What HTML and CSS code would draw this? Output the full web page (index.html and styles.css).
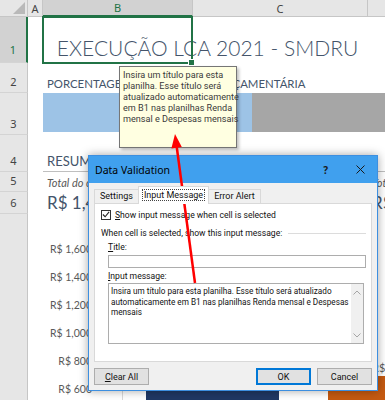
FILE: index.html
```html
<!DOCTYPE html>
<html>
  <head>
    <title>data validation</title>
    <link rel="stylesheet" href="styles.css">
  </head>

  <body>
    <div class="sheet">
      <div class="corner"></div>
      <div class="colhead">A</div>
      <div class="colhead sel">B</div>
      <div class="colhead">C</div>
      <div class="colhead"></div>

      <div class="rowhead r1 sel">1</div>
      <div class="rowhead r2">2</div>
      <div class="rowhead r3">3</div>
      <div class="rowhead r4">4</div>
      <div class="rowhead r5">5</div>
      <div class="rowhead r6">6</div>
      <div class="rowhead r7"></div>

      <div class="cell title">EXECUÇÃO LCA 2021 - SMDRU</div>
      <div class="active"></div>
      <div class="cell subtitle">PORCENTAGEM DE EXECUÇÃO ORÇAMENTÁRIA</div>
      <div class="progress"><div class="done"></div><div class="rest"></div></div>
      <div class="cell section">RESUMO GERAL</div>
      <div class="cell note">Total do orçamento</div>
      <div class="cell note colD">Total do orçamento</div>
      <div class="cell amount">R$ 1,420,000.00</div>
      <div class="cell amount colD">R$ 1,000,000.00</div>

      <div class="chart">
        <div class="axis">
          <span>R$ 1,600</span>
          <span>R$ 1,400</span>
          <span>R$ 1,200</span>
          <span>R$ 1,000</span>
          <span>R$ 800</span>
          <span>R$ 600</span>
        </div>
        <div class="plot">
          <div class="bar navy"></div>
          <div class="col2">
            <span class="barlabel">R$ 900</span>
            <div class="bar orange"></div>
          </div>
        </div>
      </div>
    </div>

    <!-- input message tooltip -->
    <div class="tip">
      Insira um título para esta<br>
      planilha. Esse título será<br>
      atualizado automaticamente<br>
      em B1 nas planilhas Renda<br>
      mensal e Despesas mensais
    </div>

    <div class="dialog">
      <div class="titlebar">
        <span class="dtitle">Data Validation</span>
        <span class="help">?</span>
        <svg class="close" width="9" height="9" viewBox="0 0 9 9">
          <path d="M0.5 0.5 L8.5 8.5 M8.5 0.5 L0.5 8.5" stroke="#1a1a1a" stroke-width="1" fill="none" />
        </svg>
      </div>
      <div class="dbody">
        <div class="tabs">
          <div class="tab">Settings</div>
          <div class="tab on"><span class="focus">Input Message</span></div>
          <div class="tab">Error Alert</div>
        </div>
        <div class="panel">
          <div class="check">
            <span class="box">
              <svg width="9" height="9" viewBox="0 0 9 9">
                <path d="M1 4.5 L3.5 7 L8 1.5" stroke="#222" stroke-width="1.2" fill="none" />
              </svg>
            </span>
            <span><u>S</u>how input message when cell is selected</span>
          </div>
          <div class="legend">
            <span>When cell is selected, show this input message:</span>
            <span class="rule"></span>
          </div>
          <div class="field"><u>T</u>itle:</div>
          <div class="input"></div>
          <div class="field"><u>I</u>nput message:</div>
          <div class="textarea">
            <div class="msg">
              Insira um título para esta planilha. Esse título será atualizado<br>
              automaticamente em B1 nas planilhas Renda mensal e Despesas<br>
              mensais
            </div>
            <div class="scroll">
              <svg width="8" height="5" viewBox="0 0 8 5">
                <path d="M0.5 4.5 L4 1 L7.5 4.5" stroke="#a6a6a6" fill="none" />
              </svg>
              <svg width="8" height="5" viewBox="0 0 8 5">
                <path d="M0.5 0.5 L4 4 L7.5 0.5" stroke="#a6a6a6" fill="none" />
              </svg>
            </div>
          </div>
        </div>
        <div class="buttons">
          <div class="btn"><u>C</u>lear All</div>
          <div class="spacer"></div>
          <div class="btn default">OK</div>
          <div class="btn">Cancel</div>
        </div>
      </div>
    </div>

    <!-- red arrow from the message box to the tooltip -->
    <svg class="arrow" width="385" height="400" viewBox="0 0 385 400">
      <line x1="195" y1="283" x2="176.6" y2="146" stroke="#ff0000" stroke-width="2.5" />
      <polygon points="175,134 181.8,147 171.4,148.4" fill="#ff0000" />
    </svg>
  </body>
</html>
```

FILE: styles.css
```css
/* page */

* {
  box-sizing: border-box;
}

body {
  margin: 0;
  width: 385px;
  height: 400px;
  overflow: hidden;
  position: relative;
  background-color: #fff;
  font-family: "Noto Sans", sans-serif;
}

/* the worksheet grid */

.sheet {
  display: grid;
  grid-template-columns: 28px 15px 150px 175px 1fr;
  grid-template-rows: 17px 46px 30px 42px 37px 20px 22px 1fr;
  height: 400px;
}

.corner {
  grid-row: 1;
  grid-column: 1;
  background-color: #e6e6e6;
  border-right: 1px solid #c6c6c6;
  border-bottom: 1px solid #c6c6c6;
  position: relative;
}

.corner::after {
  content: "";
  position: absolute;
  right: 2px;
  bottom: 2px;
  border-left: 12px solid transparent;
  border-bottom: 12px solid #b9b9b9;
}

.colhead {
  grid-row: 1;
  background-color: #e6e6e6;
  border-right: 1px solid #c6c6c6;
  border-bottom: 1px solid #c6c6c6;
  color: #444;
  font-size: 11px;
  display: flex;
  align-items: center;
  justify-content: center;
}

.colhead.sel {
  background-color: #d2d2d2;
  color: #217346;
  border-bottom: 2px solid #217346;
}

.rowhead {
  grid-column: 1;
  background-color: #e6e6e6;
  border-right: 1px solid #c6c6c6;
  border-bottom: 1px solid #d4d4d4;
  color: #444;
  font-size: 11px;
  line-height: 12px;
  display: flex;
  align-items: flex-end;
  justify-content: center;
  padding-bottom: 4px;
}

.rowhead.sel {
  background-color: #d2d2d2;
  color: #217346;
  border-right: 2px solid #217346;
  padding-bottom: 6px;
}

.r1 { grid-row: 2; }
.r2 { grid-row: 3; }
.r3 { grid-row: 4; }
.r4 { grid-row: 5; }
.r5 { grid-row: 6; }
.r6 { grid-row: 7; }
.r7 { grid-row: 8; border-bottom: none; }

/* cells */

.cell {
  white-space: nowrap;
  display: flex;
  align-items: flex-end;
  padding-left: 4px;
  color: #44546a;
  font-family: Lato, sans-serif;
}

.title {
  grid-row: 2;
  grid-column: 3 / 5;
  justify-content: center;
  font-size: 21px;
  font-weight: 300;
  padding-bottom: 3px;
}

.active {
  grid-row: 2;
  grid-column: 3;
  margin: -1px 0 -1px -1px;
  border: 2px solid #217346;
  position: relative;
}

.active::after {
  content: "";
  position: absolute;
  right: -4px;
  bottom: -4px;
  width: 5px;
  height: 5px;
  background-color: #217346;
  border: 1px solid #fff;
}

.subtitle {
  grid-row: 3;
  grid-column: 3 / 6;
  font-size: 11.4px;
  padding-bottom: 3px;
}

.progress {
  grid-row: 4;
  grid-column: 3 / 6;
  display: flex;
  margin-bottom: 3px;
}

.done {
  width: 209px;
  background-color: #9dc3e6;
}

.rest {
  flex: 1;
  background-color: #a6a6a6;
}

.section {
  grid-row: 5;
  grid-column: 3 / 6;
  font-size: 13px;
  border-bottom: 1px solid #bfbfbf;
  padding-bottom: 2px;
}

.note {
  grid-row: 6;
  grid-column: 3;
  font-size: 11px;
  font-style: italic;
  color: #595959;
  padding-bottom: 3px;
}

.amount {
  grid-row: 7;
  grid-column: 3;
  font-size: 17px;
  padding-bottom: 1px;
}

.colD {
  grid-column: 5;
}

/* chart in row 7 */

.chart {
  grid-row: 8;
  grid-column: 2 / 6;
  display: flex;
}

.axis {
  width: 64px;
  display: flex;
  flex-direction: column;
  align-items: flex-end;
  padding-top: 21px;
  color: #595959;
  font-family: Lato, sans-serif;
  font-size: 10.5px;
}

.axis span {
  height: 28px;
  line-height: 28px;
}

.plot {
  flex: 1;
  display: flex;
  align-items: flex-end;
  margin-left: 30px;
  padding-left: 23px;
  border-left: 1px solid #d9d9d9;
}

.bar {
  width: 133px;
}

.navy {
  height: 100px;
  background-color: #203864;
}

.col2 {
  margin-left: 49px;
  flex: 1;
  display: flex;
  flex-direction: column;
}

.barlabel {
  padding-left: 44px;
  color: #595959;
  font-family: Lato, sans-serif;
  font-size: 11px;
  line-height: 16px;
}

.orange {
  width: auto;
  height: 27px;
  background-color: #c55a11;
}

/* input message tooltip */

.tip {
  position: absolute;
  left: 119px;
  top: 66px;
  width: 118px;
  height: 82px;
  padding: 3px 3px;
  background-color: #ffffe1;
  border: 1px solid #767676;
  box-shadow: 2px 2px 3px rgba(0, 0, 0, 0.25);
  color: #3a3a3a;
  font-family: Roboto, sans-serif;
  font-size: 9.1px;
  line-height: 11px;
  white-space: nowrap;
}

/* data validation dialog */

.dialog {
  position: absolute;
  left: 88px;
  top: 155px;
  width: 290px;
  height: 236px;
  border: 1px solid #3d8fe0;
  background-color: #f0f0f0;
  box-shadow: 0 0 9px rgba(0, 0, 0, 0.35);
  color: #111;
  font-family: Roboto, sans-serif;
  font-size: 9px;
}

.titlebar {
  height: 27px;
  background-color: #40a0ee;
  display: flex;
  align-items: center;
  padding-left: 6px;
  font-family: "Noto Sans", sans-serif;
}

.dtitle {
  flex: 1;
  font-size: 10.5px;
  color: #000;
}

.help {
  font-size: 10px;
  font-weight: bold;
  color: #1a1a1a;
  margin-right: 28px;
}

.close {
  margin-right: 12px;
}

.dbody {
  padding: 3px 5px 0 5px;
}

.tabs {
  display: flex;
  align-items: flex-end;
  height: 17px;
}

.tab {
  height: 14px;
  padding: 0 5px;
  border: 1px solid #d9d9d9;
  border-bottom: none;
  line-height: 13px;
  margin-right: -1px;
}

.tab.on {
  height: 18px;
  background-color: #fff;
  line-height: 16px;
  padding: 0 3px;
  position: relative;
  z-index: 1;
  margin-bottom: -1px;
}

.focus {
  border: 1px dotted #444;
  padding: 0 1px;
}

.panel {
  height: 159px;
  background-color: #fff;
  border: 1px solid #d9d9d9;
  padding: 5px 5px 0 6px;
  font-size: 8.6px;
}

.check {
  display: flex;
  align-items: center;
  height: 11px;
  gap: 4px;
}

.box {
  width: 10px;
  height: 10px;
  border: 1px solid #333;
  display: flex;
  align-items: center;
  justify-content: center;
}

.legend {
  display: flex;
  align-items: center;
  gap: 6px;
  margin-top: 7px;
  height: 12px;
}

.rule {
  flex: 1;
  border-top: 1px solid #dcdcdc;
}

.field {
  margin-left: 7px;
  margin-top: 2px;
  height: 12px;
  line-height: 12px;
}

.input {
  margin: 2px 0 0 7px;
  height: 13px;
  border: 1px solid #adadad;
}

.textarea {
  margin: 1px 2px 0 7px;
  height: 61px;
  border: 1px solid #adadad;
  display: flex;
}

.msg {
  flex: 1;
  padding: 2px 2px;
  font-size: 8.2px;
  line-height: 10.5px;
  white-space: nowrap;
  overflow: hidden;
}

.scroll {
  width: 12px;
  background-color: #f0f0f0;
  display: flex;
  flex-direction: column;
  justify-content: space-between;
  align-items: center;
  padding: 6px 0 5px 0;
}

.buttons {
  display: flex;
  margin-top: 6px;
  gap: 6px;
}

.spacer {
  flex: 1;
}

.btn {
  width: 55px;
  height: 17px;
  border: 1px solid #adadad;
  background-color: #e1e1e1;
  display: flex;
  align-items: center;
  justify-content: center;
}

.btn.default {
  border: 1px solid #0078d7;
  box-shadow: inset 0 0 0 1px #0078d7;
}

.arrow {
  position: absolute;
  left: 0;
  top: 0;
}
```
